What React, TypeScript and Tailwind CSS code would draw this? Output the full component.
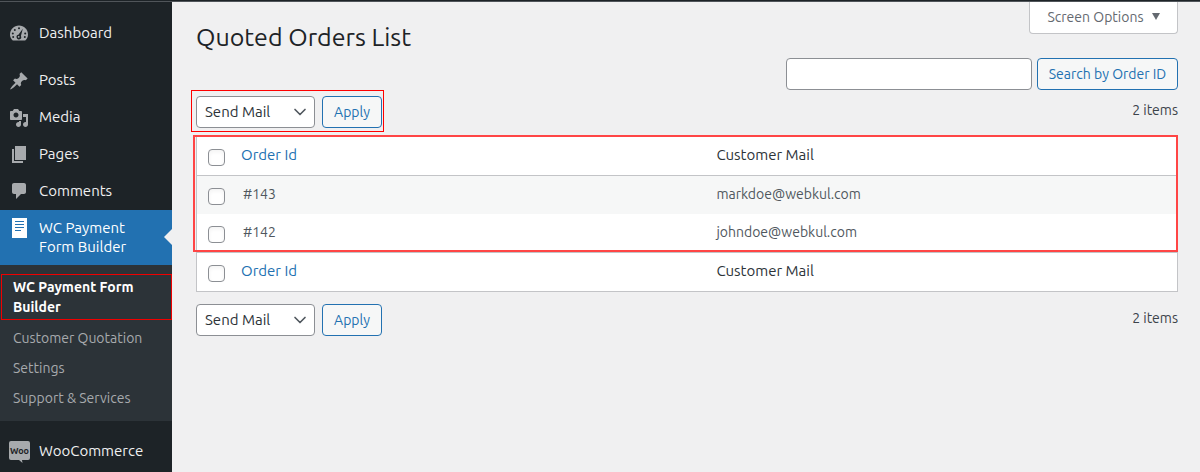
import type { ReactNode } from "react"
import { ChevronDown } from "lucide-react"

interface MenuItemProps {
  label: string
  icon: ReactNode
}

interface BulkActionsProps {
  highlighted?: boolean
}

const orders = [
  { id: "143", mail: "markdoe@webkul.com" },
  { id: "142", mail: "johndoe@webkul.com" },
]

const subMenu = ["Customer Quotation", "Settings", "Support & Services"]

const DashboardIcon = () => (
  <svg viewBox="0 0 20 20" className="size-5 fill-current" aria-hidden="true">
    <path d="M3.800 16.500h12.400C18 15 19 13 19 10.600c0-5-4-9-9-9s-9 4-9 9c0 2.400 1 4.400 2.800 5.900z" />
    <g className="fill-[#1d2327]">
      <circle cx="10" cy="4.200" r="1" />
      <circle cx="5.800" cy="5.900" r="1" />
      <circle cx="3.800" cy="9.500" r="1" />
      <circle cx="4.200" cy="13" r="1" />
      <circle cx="16.200" cy="9.500" r="1" />
      <circle cx="15.800" cy="13" r="1" />
      <path d="M13.800 4.800l-1.900 7.200a2.300 2.300 0 1 1-2.500-1.200z" />
    </g>
    <circle cx="9.700" cy="12.800" r="0.900" />
  </svg>
)

const PostsIcon = () => (
  <svg viewBox="0 0 20 20" className="size-5 fill-current" aria-hidden="true">
    <path d="M10.440 3.020l1.820-1.820 6.360 6.350-1.830 1.820c-1.050-.68-2.480-.57-3.410.36l-.75.75c-.92.93-1.040 2.350-.35 3.410l-1.830 1.820-2.410-2.410-2.800 2.790c-.42.42-3.380 2.710-3.800 2.290s1.860-3.390 2.280-3.810l2.790-2.790L4.100 9.360l1.830-1.820c1.050.69 2.480.57 3.400-.36l.75-.75c.93-.92 1.050-2.350.36-3.410z" />
  </svg>
)

const MediaIcon = () => (
  <svg viewBox="0 0 20 20" className="size-5 fill-current" aria-hidden="true">
    <path d="M13 11V4c0-.55-.45-1-1-1h-1.670L9 1H5L3.670 3H2c-.55 0-1 .45-1 1v7c0 .55.45 1 1 1h10c.55 0 1-.45 1-1zM7 4.500c1.380 0 2.500 1.120 2.500 2.500S8.380 9.500 7 9.500 4.500 8.380 4.500 7 5.620 4.500 7 4.500zM14 6h5v10.500c0 1.380-1.120 2.500-2.500 2.500S14 17.880 14 16.500s1.120-2.500 2.500-2.500c.17 0 .34.02.5.05V9h-3V6zm-4 8.050V13h2v3.500c0 1.380-1.120 2.500-2.500 2.500S7 17.880 7 16.500 8.120 14 9.500 14c.17 0 .34.02.5.05z" />
  </svg>
)

const PagesIcon = () => (
  <svg viewBox="0 0 20 20" className="size-5 fill-current" aria-hidden="true">
    <path d="M6 15V1h11v14H6zm-1 1h9v2H3V4h2v12z" />
  </svg>
)

const CommentsIcon = () => (
  <svg viewBox="0 0 20 20" className="size-5 fill-current" aria-hidden="true">
    <path d="M5 1h10c1.100 0 2 .9 2 2v7c0 1.100-.9 2-2 2h-3l-5 5v-5H5c-1.100 0-2-.9-2-2V3c0-1.100.9-2 2-2z" />
  </svg>
)

const FormIcon = () => (
  <svg viewBox="0 0 20 20" className="size-5" aria-hidden="true">
    <path d="M3 0h15v20H3z" fill="#fff" />
    <path d="M6 3.500h9M6 6.500h9M6 9.500h9M6 12.500h6" stroke="#2271b1" strokeWidth="1.200" />
  </svg>
)

const WooIcon = () => (
  <svg viewBox="0 0 21 22" className="h-[22px] w-[21px] shrink-0" aria-hidden="true">
    <path d="M2 0h17a2 2 0 0 1 2 2v15a2 2 0 0 1-2 2h-6l.5 3L10 19H2a2 2 0 0 1-2-2V2a2 2 0 0 1 2-2z" fill="#a7aaad" />
    <text x="10.500" y="12.500" textAnchor="middle" fontSize="9" fontWeight="700" fill="#1d2327">
      Woo
    </text>
  </svg>
)

function MenuItem({ label, icon }: MenuItemProps) {
  return (
    <li>
      <a href="#" className="flex h-[37px] items-center gap-[10px] pl-[9px] text-[15px] text-[#f0f0f1]">
        <span className="flex w-5 shrink-0 justify-center text-[#a7aaad]">{icon}</span>
        {label}
      </a>
    </li>
  )
}

function Sidebar() {
  return (
    <nav className="w-[172px] shrink-0 bg-[#1d2327] pt-[13px]">
      <ul>
        <MenuItem label="Dashboard" icon={<DashboardIcon />} />
        <li className="h-[10px]" />
        <MenuItem label="Posts" icon={<PostsIcon />} />
        <MenuItem label="Media" icon={<MediaIcon />} />
        <MenuItem label="Pages" icon={<PagesIcon />} />
        <MenuItem label="Comments" icon={<CommentsIcon />} />
        <li>
          <a
            href="#"
            className="relative flex h-[55px] gap-[10px] bg-[#2271b1] pt-2 pl-[9px] text-[15px] leading-[19px] text-white"
          >
            <span className="w-5 shrink-0">
              <FormIcon />
            </span>
            <span>
              WC Payment
              <br />
              Form Builder
            </span>
            <span className="absolute top-[19px] right-0 border-y-8 border-r-8 border-y-transparent border-r-[#f0f0f1]" />
          </a>
          <ul className="bg-[#2c3338] pt-[9px] pb-2 text-sm text-[#a7aaad]">
            <li className="mb-[3px] ml-px border border-[#f00000] py-[2px] pl-[11px]">
              <a href="#" className="block leading-5 font-bold text-white">
                WC Payment Form
                <br />
                Builder
              </a>
            </li>
            {subMenu.map((label) => (
              <li key={label}>
                <a href="#" className="flex h-[30px] items-center pl-[13px]">
                  {label}
                </a>
              </li>
            ))}
          </ul>
        </li>
        <li className="h-3" />
        <MenuItem label="WooCommerce" icon={<WooIcon />} />
      </ul>
    </nav>
  )
}

function BulkActions({ highlighted }: BulkActionsProps) {
  return (
    <div className="flex items-start justify-between">
      <div className="relative flex gap-[7px]">
        <div className="relative">
          <select
            aria-label="Select bulk action"
            className="block h-8 w-[119px] appearance-none rounded-[4px] border border-[#8c8f94] bg-white pl-2 text-[15px] text-[#2c3338]"
          >
            <option>Send Mail</option>
          </select>
          <ChevronDown className="pointer-events-none absolute top-[6px] right-[5px] size-5 text-[#50575e]" />
        </div>
        <button className="h-8 w-[60px] rounded-[4px] border border-[#2271b1] bg-[#f6f7f7] text-sm text-[#2271b1]">
          Apply
        </button>
        {highlighted && (
          <div className="pointer-events-none absolute -top-[6px] -right-[2px] -bottom-1 -left-[5px] border border-[#ff0000]" />
        )}
      </div>
      <span className="pt-1 text-sm text-[#3c434a]">2 items</span>
    </div>
  )
}

function Checkbox({ label }: { label: string }) {
  return (
    <input
      type="checkbox"
      aria-label={label}
      className="mt-[3px] block size-[17px] appearance-none rounded-[4px] border border-[#8c8f94] bg-white shadow-inner"
    />
  )
}

function HeadingCells() {
  return (
    <>
      <td className="w-11 pl-[11px]">
        <Checkbox label="Select all" />
      </td>
      <th scope="col" className="pb-[2px] text-left font-normal">
        <a href="#" className="text-[#2271b1]">
          Order Id
        </a>
      </th>
      <th scope="col" className="w-[47%] pb-[2px] text-left font-normal">
        Customer Mail
      </th>
    </>
  )
}

function OrdersTable() {
  return (
    <div className="relative">
      <table className="w-full table-fixed border-separate border-spacing-0 border border-[#c3c4c7] bg-white text-[15px] text-[#2c3338]">
        <thead>
          <tr className="h-[39px] [&>*]:border-b [&>*]:border-[#c3c4c7]">
            <HeadingCells />
          </tr>
        </thead>
        <tbody className="text-sm text-[#50575e]">
          {orders.map((order) => (
            <tr key={order.id} className="h-[38px] odd:bg-[#f6f7f7]">
              <td className="pl-[11px]">
                <Checkbox label={`Select order ${order.id}`} />
              </td>
              <td className="pb-[2px] pl-[2px]">#{order.id}</td>
              <td className="pb-[2px]">{order.mail}</td>
            </tr>
          ))}
        </tbody>
        <tfoot>
          <tr className="h-[39px] [&>*]:border-t [&>*]:border-[#c3c4c7]">
            <HeadingCells />
          </tr>
        </tfoot>
      </table>
      <div className="pointer-events-none absolute -top-px right-0 bottom-10 -left-[3px] border-2 border-[#ff4545]" />
    </div>
  )
}

function App() {
  return (
    <div className="flex min-h-screen flex-col bg-[#f0f0f1] font-['Ubuntu','Noto_Sans',sans-serif]">
      <div className="h-[2px] border-b border-[#50555a] bg-[#1d2327]" />
      <div className="flex flex-1">
        <Sidebar />
        <main className="min-w-0 flex-1 pr-[22px] pl-6">
          <div className="flex h-14 items-start justify-between">
            <h1 className="pt-[18px] text-[25px] leading-[34px] text-[#1d2327]">Quoted Orders List</h1>
            <button className="flex h-8 w-[149px] items-center justify-center gap-2 rounded-b-[4px] border border-t-0 border-[#c3c4c7] bg-white pb-[2px] text-sm text-[#646970]">
              Screen Options
              <svg viewBox="0 0 8 7" className="h-[7px] w-2 fill-current" aria-hidden="true">
                <path d="M0 0h8L4 7z" />
              </svg>
            </button>
          </div>
          <form className="flex justify-end gap-[5px]">
            <input
              aria-label="Order ID"
              type="search"
              className="h-8 w-[246px] rounded-[4px] border border-[#8c8f94] bg-white px-2 text-sm"
            />
            <button
              type="button"
              className="h-8 w-[141px] rounded-[4px] border border-[#2271b1] bg-[#f6f7f7] text-sm text-[#2271b1]"
            >
              Search by Order ID
            </button>
          </form>
          <div className="pt-[6px] pb-2">
            <BulkActions highlighted />
          </div>
          <OrdersTable />
          <div className="pt-3">
            <BulkActions />
          </div>
        </main>
      </div>
    </div>
  )
}

export default App
